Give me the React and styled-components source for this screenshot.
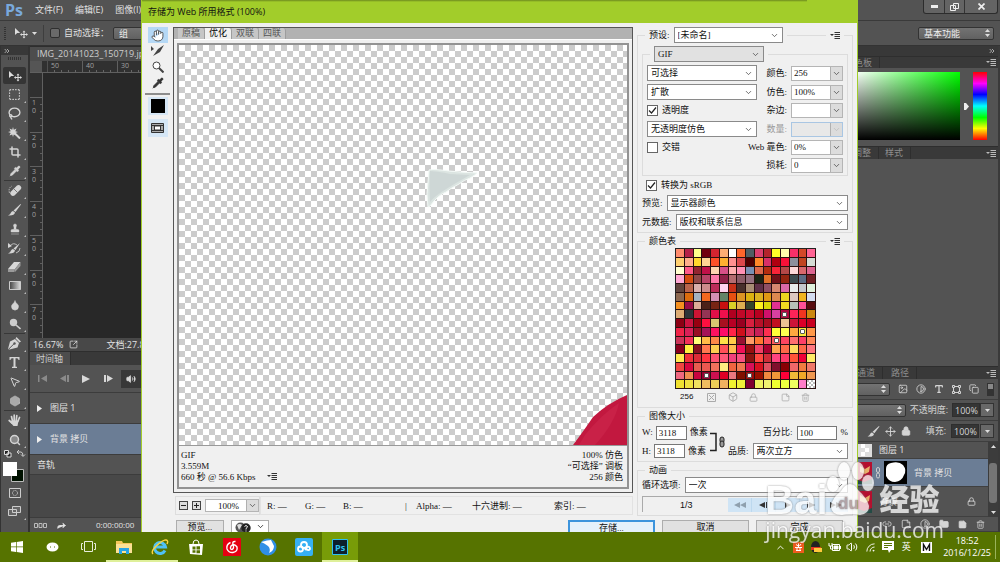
import React from "react";
import styled, { createGlobalStyle, css } from "styled-components";
import {
    Hand, Search, Pipette, Stamp, Droplet, MousePointer2,
    Hexagon, Crop, Lasso, SquareDashed, Volume2, Lock, Trash2, Type,
    Box, StickyNote, Image, Contrast, Copy, Move, ChevronUp, ChevronDown, Link2, Folder, Forward,
    ChevronsRight, SquareArrowOutUpRight, Rss,
} from "lucide-react";

const GlobalStyle = createGlobalStyle`
    * {
        box-sizing: border-box;
    }
    body {
        margin: 0;
        overflow: hidden;
        background: #282828;
    }
    button, input, select {
        font: inherit;
        color: inherit;
        margin: 0;
        padding: 0;
        border: 0;
        border-radius: 0;
    }
`;

const Screen = styled.div`
    position: relative;
    display: flex;
    flex-direction: column;
    height: 100vh;
    overflow: hidden;
    font-family: "Open Sans", "Noto Sans CJK SC", sans-serif;
    font-size: 9px;
    line-height: 12px;
    color: #e2e2e2;
`;

const Desktop = styled.div`
    position: relative;
    flex: 1;
    min-height: 0;
    display: flex;
    flex-direction: column;
    background: #535353;
`;

const MenuBar = styled.nav`
    display: flex;
    align-items: center;
    gap: 12px;
    height: 21px;
    padding-left: 5px;
    border-bottom: 1px solid #3a3a3a;
`;

const Logo = styled.span`
    font: bold 16px/18px "Open Sans", sans-serif;
    color: #79a9dc;
`;

const WindowButtons = styled.div`
    display: flex;
    align-self: flex-start;
    margin-left: auto;
    margin-right: 2px;
    border: 1px solid #2c2c2c;
    border-top: 0;
    border-radius: 0 0 3px 3px;
    background: #646464;
`;

const WindowButton = styled.button`
    width: ${(p) => (p.$wide ? 33 : 20)}px;
    height: 13px;
    display: grid;
    place-items: center;
    background: none;
    border-left: ${(p) => (p.$first ? 0 : "1px solid #333")};
`;

const OptionsBar = styled.div`
    display: flex;
    align-items: center;
    height: 25px;
    gap: 4px;
    padding: 0 6px 0 4px;
    border-bottom: 1px solid #333;
`;

const Grip = styled.span`
    width: ${(p) => (p.$row ? 14 : 2)}px;
    height: ${(p) => (p.$row ? 3 : 14)}px;
    background: repeating-linear-gradient(${(p) => (p.$row ? "90deg" : "0deg")}, #333 0 1px, #535353 1px 2px);
`;

const Divider = styled.span`
    width: 1px;
    height: 17px;
    margin: 0 2px;
    background: #3e3e3e;
`;

const CheckLabel = styled.label`
    display: flex;
    align-items: center;
    gap: 4px;
    white-space: nowrap;
`;

const DarkCheck = styled.input`
    appearance: none;
    width: 10px;
    height: 10px;
    border: 1px solid #2f2f2f;
    border-radius: 2px;
    background: #6a6a6a;
`;

const DarkSelect = styled.select`
    appearance: none;
    width: ${(p) => p.$w}px;
    height: 13px;
    padding-left: 5px;
    border: 1px solid #333;
    border-radius: 2px;
    background: linear-gradient(#737373, #616161);
    color: #eee;
`;

const SelectWrap = styled.span`
    display: inline-grid;
    align-items: center;
    margin-left: ${(p) => (p.$push ? "auto" : 0)};
    > * {
        grid-area: 1 / 1;
    }
    > svg {
        justify-self: end;
        margin-right: 4px;
        pointer-events: none;
    }
`;

const Workspace = styled.div`
    flex: 1;
    min-height: 0;
    display: flex;
`;

const Toolbar = styled.aside`
    flex: none;
    width: 30px;
    display: flex;
    flex-direction: column;
    align-items: center;
    border-left: 1px solid #333;
    border-right: 2px solid #333;
    padding-bottom: 4px;
`;

const ToolbarHead = styled.div`
    width: 100%;
    height: 9px;
    margin-bottom: 2px;
    padding-left: 2px;
    background: #383838;
    display: flex;
    align-items: center;
`;

const ToolList = styled.div`
    display: flex;
    flex-direction: column;
    align-items: center;
    padding-top: 6px;
`;

const ToolButton = styled.button`
    position: relative;
    width: 23px;
    height: 17px;
    margin: 1px 0;
    display: grid;
    place-items: center;
    border-radius: 2px;
    color: #d4d4d4;
    background: ${(p) => (p.$active ? "#353535" : "none")};
    &::after {
        content: "";
        position: absolute;
        right: 0;
        bottom: 0;
        border: 1px solid transparent;
        border-right-color: #bbb;
        border-bottom-color: #bbb;
        display: ${(p) => (p.$active || p.$plain ? "none" : "block")};
    }
`;

const ToolSeparator = styled.span`
    width: 21px;
    height: 1px;
    background: #383838;
`;

const Document = styled.main`
    flex: 1;
    min-width: 0;
    display: flex;
    flex-direction: column;
    background: #282828;
`;

const TabStrip = styled.div`
    display: flex;
    align-items: stretch;
    height: ${(p) => p.$h}px;
    background: #393939;
    border-top: 1px solid #2e2e2e;
`;

const Tab = styled.span`
    display: flex;
    align-items: center;
    padding: 0 7px 0 ${(p) => p.$pad || 6}px;
    background: ${(p) => (p.$on ? "#4d4d4d" : "none")};
    border-right: 1px solid #2e2e2e;
    color: ${(p) => (p.$dim ? "#8e8e8e" : "#cdcdcd")};
    white-space: nowrap;
`;

const RulerRow = styled.div`
    display: flex;
    height: 12px;
    background: #303030;
    border-bottom: 1px solid #606060;
    color: #a0a0a0;
    font-size: 7px;
    line-height: 9px;
`;

const RulerCorner = styled.span`
    flex: none;
    width: 18px;
    border-right: 1px solid #505050;
    background: linear-gradient(90deg, #555 12px, transparent 12px);
`;

const RulerMark = styled.span`
    flex: none;
    width: 35px;
    padding-left: 3px;
    border-right: 1px solid #606060;
    background: repeating-linear-gradient(90deg, transparent 0 6px, #666 6px 7px) bottom / 100% 2px no-repeat;
`;

const CanvasRow = styled.div`
    flex: 1;
    min-height: 0;
    display: flex;
`;

const VerticalRuler = styled.div`
    width: 13px;
    overflow: hidden;
    padding-top: 24px;
    background: #303030;
    border-right: 1px solid #606060;
`;

const VerticalMark = styled.div`
    display: grid;
    align-content: start;
    row-gap: 1px;
    width: 12px;
    height: ${(p) => (p.$short ? 34 : 35)}px;
    padding: 1px 0 0 2px;
    border-top: 1px solid #606060;
    color: #a0a0a0;
    font-size: 7px;
    line-height: 7px;
    background: repeating-linear-gradient(#303030 0 6px, #606060 6px 7px) right / 2px 100% no-repeat;
`;

const StatusBar = styled.div`
    display: flex;
    align-items: center;
    height: 13px;
    padding-left: 3px;
    gap: 6px;
    background: #484848;
    > :last-child {
        margin-left: 22px;
    }
`;

const Playback = styled.div`
    display: flex;
    align-items: center;
    height: 28px;
    padding-left: 1px;
    background: #535353;
    border-bottom: 1px solid #3c3c3c;
`;

const PlayButton = styled.button`
    width: ${(p) => (p.$pressed ? 20 : 22)}px;
    height: 18px;
    margin-left: ${(p) => (p.$pressed ? 2 : 0)}px;
    display: grid;
    place-items: center;
    color: ${(p) => (p.$dim ? "#8a8a8a" : "#d8d8d8")};
    background: ${(p) => (p.$pressed ? "#383838" : "none")};
`;

const Track = styled.div`
    display: flex;
    align-items: center;
    gap: 8px;
    height: ${(p) => p.$h}px;
    padding-left: 7px;
    background: ${(p) => (p.$on ? "#6b7d95" : "#535353")};
    border-bottom: 1px solid #3c3c3c;
`;

const TrackFill = styled.div`
    height: 42px;
    background: #484848;
`;

const TimelineFoot = styled.div`
    display: flex;
    align-items: center;
    height: 15px;
    padding-left: 4px;
    gap: 9px;
    background: #535353;
    border-top: 1px solid #3c3c3c;
    > :last-child {
        margin-left: 20px;
        font-size: 8px;
    }
`;

const Panels = styled.aside`
    flex: none;
    width: 182px;
    display: flex;
    flex-direction: column;
    background: #535353;
    border-right: 2px solid #3a3a3a;
`;

const PanelHead = styled.div`
    height: 10px;
    background: #383838;
    display: flex;
    align-items: center;
    justify-content: flex-end;
    padding-right: 2px;
`;

const PanelTabs = styled(TabStrip)`
    padding-left: ${(p) => p.$left}px;
    > svg {
        margin: auto 2px auto auto;
    }
`;

const ColorPanel = styled.div`
    display: flex;
    gap: 4px;
    height: 78px;
    padding: 4px 11px 6px 0;
    align-items: stretch;
    > svg {
        align-self: center;
    }
`;

const ColorField = styled.div`
    flex: 1;
    background: linear-gradient(transparent, #000), linear-gradient(90deg, #fff, #fff 25%, #0f0);
`;

const HueBar = styled.div`
    width: 14px;
    background: linear-gradient(#f00, #f0f 17%, #00f 33%, #0ff 50%, #0f0 67%, #ff0 83%, #f00);
`;

const PanelSpace = styled.div`
    flex: 1;
    min-height: 0;
`;

const PanelRow = styled.div`
    display: flex;
    align-items: center;
    justify-content: flex-end;
    gap: ${(p) => p.$gap || 4}px;
    height: ${(p) => p.$h}px;
    padding-right: 4px;
    color: #d4d4d4;
    border-bottom: 1px solid #3e3e3e;
    white-space: nowrap;
`;

const DarkNumber = styled.input`
    width: 28px;
    height: 14px;
    padding-left: 2px;
    background: #353535;
    border: 1px solid #2e2e2e;
`;

const DarkDrop = styled.button`
    width: 14px;
    height: 14px;
    margin-left: -4px;
    display: grid;
    place-items: center;
    background: #686868;
    border: 1px solid #333;
`;

const LayerList = styled.div`
    display: flex;
    height: 75px;
`;

const Layers = styled.div`
    flex: 1;
    display: flex;
    flex-direction: column;
`;

const Layer = styled.div`
    flex: none;
    display: flex;
    align-items: center;
    gap: 3px;
    height: ${(p) => p.$h}px;
    padding-left: 40px;
    background: ${(p) => (p.$on ? "#6b7d95" : "#535353")};
    border-bottom: 1px solid #404040;
    overflow: hidden;
    > svg:last-child {
        margin: 0 12px 0 auto;
    }
`;

const LayerName = styled.span`
    padding-left: 4px;
    font-style: ${(p) => (p.$locked ? "italic" : "normal")};
`;

const LayerScroll = styled.div`
    width: 10px;
    display: flex;
    flex-direction: column;
    align-items: center;
    justify-content: space-between;
    background: #3c3c3c;
    padding: 3px 0;
`;

const ScrollThumb = styled.span`
    width: 8px;
    height: 40px;
    margin-top: 6px;
    border-radius: 3px;
    background: #757575;
`;

/* ---- export dialog ---- */

const Dialog = styled.section`
    position: absolute;
    top: 0;
    bottom: 0;
    left: 141px;
    right: 142px;
    display: flex;
    flex-direction: column;
    overflow: hidden;
    background: #f0f0f0;
    border: solid #a2cd2a;
    border-width: 0 1px;
    color: #111;
    font-family: "Liberation Serif", "Noto Sans CJK SC", serif;
`;

const TitleBar = styled.h1`
    flex: none;
    margin: 0;
    height: 23px;
    padding-left: 6px;
    font: 9px/24px "Open Sans", "Noto Sans CJK SC", sans-serif;
    background: linear-gradient(#6e8b1e, #a2cd2a) 0 0 / calc(100% - 50px) 2px no-repeat, #a2cd2a;
`;

const DialogBody = styled.div`
    flex: 1;
    min-height: 0;
    display: flex;
    padding: 4px 4px 5px 3px;
`;

const SideTools = styled.div`
    flex: none;
    width: 25px;
    margin-right: 3px;
    display: flex;
    flex-direction: column;
    align-items: center;
`;

const SideTool = styled.button`
    width: 20px;
    height: ${(p) => (p.$tall ? 18 : 16)}px;
    margin-bottom: ${(p) => (p.$tall ? 4 : 0)}px;
    display: grid;
    place-items: center;
    color: #333;
    background: ${(p) => (p.$tall ? "#d5e6f5" : p.$on ? "#b5d8f5" : "none")};
`;

const SideLine = styled.span`
    width: 25px;
    height: 2px;
    margin: 2px 0;
    background: #8d8d8d;
`;

const BlackSwatch = styled.span`
    width: 14px;
    height: 14px;
    background: #000;
`;

const PreviewColumn = styled.div`
    flex: 1;
    min-width: 0;
    margin-right: 4px;
    display: flex;
    flex-direction: column;
    gap: 3px;
`;

const PreviewFrame = styled.div`
    flex: 1;
    min-height: 0;
    display: flex;
    flex-direction: column;
    border: 1px solid #555;
    padding: 0 3px 3px;
`;

const PreviewTabs = styled.div`
    display: flex;
    height: 12px;
    margin: 0 -3px 3px;
    padding-left: 4px;
    background: #b2b2b2;
    border-bottom: 1px solid #fff;
`;

const PreviewTab = styled.button`
    width: 27px;
    height: 11px;
    line-height: 11px;
    border-right: 1px solid #9d9d9d;
    border-radius: 0 3px 0 0;
    background: ${(p) => (p.$on ? "#f0f0f0" : "#c6c6c6")};
    color: ${(p) => (p.$on ? "#000" : "#555")};
`;

const PreviewInner = styled.div`
    flex: 1;
    min-height: 0;
    display: flex;
    flex-direction: column;
    border: 2px solid #939393;
`;

const Checker = styled.div`
    position: relative;
    flex: 1;
    background: conic-gradient(#ccc 25%, #fff 0 50%, #ccc 0 75%, #fff 0) 0 0 / 12px 12px;
`;

const Slice = styled.svg`
    position: absolute;
    left: ${(p) => p.$left};
    right: ${(p) => p.$right};
    top: ${(p) => p.$top};
    bottom: ${(p) => p.$bottom};
`;

const PreviewInfo = styled.div`
    display: flex;
    justify-content: space-between;
    height: 42px;
    padding: 4px 4px 0 2px;
    border-top: 1px solid #999;
    line-height: 11px;
    p {
        margin: 0;
    }
    p:last-child {
        text-align: right;
    }
`;

const ZoomRow = styled.div`
    display: flex;
    height: 19px;
`;

const ZoomBox = styled.div`
    display: flex;
    align-items: center;
    border: 1px solid #ddd;
    margin-left: 2px;
    padding-left: 3px;
    gap: 4px;
`;

const StepButton = styled.button`
    width: 9px;
    height: 9px;
    display: grid;
    place-items: center;
    border: 1px solid #444;
    background: #ddd;
`;

const Readout = styled.div`
    flex: 1;
    display: grid;
    grid-template-columns: 38px 38px 62px 11px 56px 82px 1fr;
    align-items: center;
    padding-left: 6px;
    border: 1px solid #e2e2e2;
`;

const Settings = styled.div`
    flex: none;
    width: 216px;
    display: flex;
    flex-direction: column;
    line-height: 11px;
`;

const Group = styled.fieldset`
    min-width: 0;
    margin: 0 0 ${(p) => p.$after || 0}px;
    padding: 0 4px ${(p) => p.$bottom || 2}px;
    border: 1px solid #dcdcdc;
`;

const Legend = styled.legend`
    width: 100%;
    height: ${(p) => p.$h || 13}px;
    padding: 0;
    display: flex;
    align-items: center;
    gap: 4px;
    > i {
        height: 1px;
        background: #dcdcdc;
    }
    > i:first-child {
        width: 3px;
    }
    > i:not(:first-child) {
        flex: 1;
    }
    > svg + i:last-child {
        flex: none;
        width: 4px;
    }
`;

const OptionGrid = styled.div`
    display: grid;
    grid-template-columns: 110px minmax(0, 1fr) 52px;
    align-items: center;
    column-gap: 4px;
    row-gap: 3px;
    > label:nth-child(3n + 2) {
        justify-self: end;
    }
`;

const Field = styled.div`
    display: flex;
    align-items: center;
    justify-content: ${(p) => (p.$end ? "flex-end" : "flex-start")};
    gap: ${(p) => p.$gap || 4}px;
    height: ${(p) => p.$h || 16}px;
    margin-top: ${(p) => p.$top || 0}px;
    white-space: nowrap;
`;

const selectBase = css`
    appearance: none;
    width: 100%;
    height: 16px;
    padding-left: 3px;
    border: 1px solid #8a8a8a;
    background: ${(p) => (p.$grey ? "#e1e1e1" : "#fff")};
`;

const LightSelect = styled.select`
    ${selectBase}
`;

const LightWrap = styled(SelectWrap)`
    flex: ${(p) => (p.$w ? "none" : 1)};
    width: ${(p) => (p.$w ? p.$w + "px" : "auto")};
`;

const ComboBox = styled.div`
    display: flex;
    height: ${(p) => p.$h || 15}px;
    width: ${(p) => p.$w || 52}px;
    border: 1px solid ${(p) => (p.$off ? "#a9c6e3" : "#b5b5b5")};
    background: ${(p) => (p.$off ? "#e8e8e8" : "#fff")};
    input {
        flex: 1;
        min-width: 0;
        padding-left: ${(p) => p.$pad || 2}px;
        background: none;
    }
    button {
        width: 12px;
        display: grid;
        place-items: center;
        background: #dcdcdc;
        border-left: 1px solid #b0b0b0;
        color: ${(p) => (p.$off ? "#bbb" : "#444")};
    }
`;

const GreyLabel = styled.label`
    color: ${(p) => (p.$off ? "#999" : "#111")};
    white-space: nowrap;
`;

const CheckBox = styled.input`
    appearance: none;
    width: 11px;
    height: 11px;
    border: 1px solid #666;
    background: #fff;
    &:checked {
        background: #fff url("data:image/svg+xml,%3Csvg xmlns='http://www.w3.org/2000/svg' viewBox='0 0 9 9'%3E%3Cpath d='M1 4.5 3.5 7 8 1.5' fill='none' stroke='%23222' stroke-width='1.2'/%3E%3C/svg%3E");
    }
`;

const Swatches = styled.div`
    display: grid;
    grid-template-columns: repeat(16, 1fr);
    grid-template-rows: repeat(16, 1fr);
    width: 141px;
    height: 141px;
    margin-left: 33px;
    border: solid #222;
    border-width: 1px 0 0 1px;
`;

const Swatch = styled.span`
    display: grid;
    place-items: center;
    border: solid #2a1010;
    border-width: 0 1px 1px 0;
    background: ${(p) => (p.$c === "#checks" ? "repeating-conic-gradient(#fff 0 25%, #bbb 0 50%) 0 0 / 4px 4px" : p.$c)};
    &::after {
        content: "";
        width: 3px;
        height: 3px;
        border: 1px solid #555;
        border-radius: 1px;
        background: #fff;
        display: ${(p) => (p.$mark ? "block" : "none")};
    }
`;

const SwatchTools = styled.div`
    display: grid;
    grid-template-columns: 27px 21px 21px 32px 20px 12px;
    align-items: center;
    height: 16px;
    padding-left: 38px;
    color: #aaa;
    font: 8px/12px "Liberation Sans", sans-serif;
    span {
        color: #111;
    }
`;

const SizeGrid = styled.div`
    display: grid;
    grid-template-columns: 66px 20px 1fr;
    row-gap: 3px;
    align-items: center;
    padding-top: 2px;
    > svg {
        grid-area: 1 / 2 / 3 / 3;
    }
`;

const NumberInput = styled.input`
    width: ${(p) => p.$w}px;
    height: 14px;
    padding-left: 2px;
    border: 1px solid #777;
    background: #fff;
`;

const FrameBar = styled.div`
    display: flex;
    align-items: center;
    height: 16px;
    margin-top: 3px;
    padding-left: 37px;
    border: solid #aaa;
    border-width: 1px 0 0 1px;
    font: 9px/12px "Liberation Sans", sans-serif;
    span {
        flex: 1;
    }
`;

const FrameButton = styled.button`
    width: 24px;
    height: 14px;
    display: grid;
    place-items: center;
    background: #cfe4f5;
    border-right: 1px solid #bcd8ee;
    color: ${(p) => (p.$dim ? "#8fa0ae" : "#333")};
`;

const DialogFooter = styled.footer`
    flex: none;
    display: flex;
    height: 12px;
    gap: 7px;
    padding: 0 14px 0 34px;
    overflow: hidden;
`;

const PushButton = styled.button`
    width: ${(p) => p.$w || 87}px;
    height: 18px;
    line-height: 12px;
    border: ${(p) => (p.$main ? "2px solid #3d94dc" : "1px solid #adadad")};
    background: ${(p) => (p.$main ? "#e5f1fb" : "#e1e1e1")};
    display: flex;
    justify-content: center;
`;

const HelpDrop = styled(PushButton)`
    background: #fff;
    margin-right: auto;
    gap: 5px;
    padding-top: 1px;
`;

/* ---- taskbar ---- */

const Taskbar = styled.footer`
    flex: none;
    display: flex;
    align-items: stretch;
    height: 30px;
    background: #567300;
    color: #fff;
`;

const TaskItem = styled.button`
    width: ${(p) => (p.$first ? 34 : 36)}px;
    display: grid;
    place-items: center;
    background: ${(p) => (p.$on ? "#789c08" : "none")};
    border-bottom: 2px solid ${(p) => (p.$open ? "#dff09a" : "transparent")};
    background-clip: padding-box;
    padding-top: 2px;
`;

const Tray = styled.div`
    display: flex;
    align-items: center;
    margin-left: auto;
    > span {
        width: 18px;
        display: grid;
        place-items: center;
    }
    > span:nth-of-type(9) {
        width: 22px;
    }
`;

const Clock = styled.time`
    margin: 0 4px 0 6px;
    padding-right: 4px;
    border-right: 1px solid #9ab35a;
    text-align: center;
    font-size: 9px;
    line-height: 12px;
`;

const Watermark = styled.div`
    position: absolute;
    right: 56px;
    bottom: 20px;
    opacity: 0.76;
    color: #fff;
    pointer-events: none;
    text-shadow: 0 0 2px #666;
    font-family: "Liberation Sans", "Noto Sans CJK SC", sans-serif;
`;

const WatermarkBrand = styled.div`
    display: flex;
    align-items: flex-end;
    height: 60px;
    font-size: 40px;
    line-height: 36px;
    font-weight: bold;
    svg {
        overflow: visible;
        filter: drop-shadow(0 0 1px #777);
    }
    b:last-child {
        margin-left: 6px;
        font-size: 30px;
    }
`;

const WatermarkUrl = styled.div`
    font: 21px/24px "Open Sans", sans-serif;
`;

const rows = [
    "ff8c6e b52048 ffff8c 70000e d42430 ffac74 ffffff ff662c 505e64 dc4070 b4242c ffff28 ffffac f83068 d44828 ff6494",
    "ffd070 ffb08c ffd82c ffd494 ff5028 ffb030 ff9090 dc484c 500000 ff8828 d83068 b00010 f81038 8c909c c04420 d4dcd4",
    "ffffd0 ff5888 942430 c01048 ffd4b0 d85088 ffb0b0 ff90b4 7890b4 dc684c b42c10 f82438 b44848 fcd8d8 d8686c dc6490",
    "ffa8d4 d44c10 904848 b84468 ff78a8 902048 b46c70 8c5c68 947080 1c2414 e07028 701018 942410 3c4c50 5c6c84 702024",
    "60443c b8644c d8b0ac cc8c8c bc2c58 ffd4f0 c83018 48302c a88c74 603048 905064 d88870 dc68a8 e8ecec c4c8cc e0f0dc",
    "8c6850 dc6c0c a4b4c0 f46820 d490b4 648468 e85010 dc9424 dcb010 dcb020 e09814 dc8850 ecd420 dcc8c0 f0b420 d4dcf0",
    "f49020 980c48 dcac98 4c2018 782414 c81010 d8d028 dcb050 34442c fff020 dcd808 e03090 f0d820 b8c0b8 ff5098 580c10",
    "dcac74 2c3438 cc1434 943454 e01048 f0104c b00020 c00828 cc0c30 b80020 d0106c d840a0 b00840 ff2458 f03420 cc8810",
    "8c0014 cc1440 980010 ff1040 d8c870 a81020 b80024 980020 d82040 b81028 a80c20 c01020 ecc494 cc1438 dc0028 c80020",
    "f02448 d82058 981024 a41458 ff1060 ff0c68 ff2448 d0101c dc3058 c82058 ff3050 ffff38 ffff50 ffa840 f8e838 ff9848",
    "cc3458 f43058 ffff78 ffbc48 ff8848 ffe048 ffcc48 981030 ff9c68 ff7830 ff5060 ff5c5c ff4460 ff7070 ff4068 ff8858",
    "88001c fff040 881020 ff7850 ffcc50 ff5058 ffbc50 f01058 981010 f04068 a80030 ffa450 ff6848 ffdc60 ff6848 ff7880",
    "ffec50 f03038 dc2c38 ff3440 ff5070 ff5878 f0407c f85080 881410 ff4840 d02c38 ff4480 ff3868 ff5438 f00038 ffec68",
    "f04440 d80440 e85c50 ec5850 f0705c ffec80 f06440 f07850 d81058 d81020 e05060 80102c 880004 f06868 f07c40 f07868",
    "f06880 f08c50 c80440 980030 cc1050 e00024 ec7880 801000 a00808 981000 f08840 f09838 ff0038 f0b838 f0a828 f09850",
    "f0e030 f0e040 f0e060 f0bc60 f0cc58 f0b060 f0f030 f0f038 800030 f0f060 f0f070 f0ff30 f0ff40 f0ff60 ff7cc8 checks",
];
const palette = rows.join(" ").split(" ");
const marked = [124, 158, 171, 227, 232];

function UpDown() {
    return (
        <svg width="5" height="8" viewBox="0 0 5 8" fill="#ddd">
            <path d="M0 3 2.5 0 5 3zM0 5h5L2.5 8z" />
        </svg>
    );
}

function Caret({ color = "#ddd" }) {
    return (
        <svg width="5" height="3" viewBox="0 0 5 3" fill={color}>
            <path d="M0 0h5L2.5 3z" />
        </svg>
    );
}

function MenuIcon({ color = "#bbb" }) {
    return (
        <svg width="10" height="7" viewBox="0 0 10 7">
            <path d="M0 2h4L2 4z" fill={color} />
            <path d="M4.500.5h5.500M4.500 2.500h5.500M4.500 4.500h5.500M4.500 6.500h5.500" stroke={color} />
        </svg>
    );
}

function MoveIcon() {
    return (
        <svg width="14" height="12" viewBox="0 0 14 12" fill="#ddd">
            <path d="M1 1v7l2.200-2h3z" />
            <path d="M10 3.500 11.500 5.300h-1v1.700h1.700v-1L14 7.500 12.200 9v-1h-1.700v1.700h1L10 11.500 8.500 9.700h1V8H7.800v1L6 7.500 7.800 6v1h1.700V5.300h-1z" />
        </svg>
    );
}

function Select({ label, value, w, grey }) {
    return (
        <LightWrap $w={w}>
            <LightSelect aria-label={label} $grey={grey} defaultValue={value}>
                <option>{value}</option>
            </LightSelect>
            <ChevronDown size={9} color="#444" />
        </LightWrap>
    );
}

function Combo({ id, value, off, w, h, pad, label }) {
    return (
        <ComboBox $off={off} $w={w} $h={h} $pad={pad}>
            <input id={id} defaultValue={value} disabled={off} aria-label={label} />
            <button aria-label="▾" disabled={off}><ChevronDown size={9} /></button>
        </ComboBox>
    );
}

function Check({ text, checked }) {
    return (
        <CheckLabel>
            <CheckBox type="checkbox" defaultChecked={checked} />
            {text}
        </CheckLabel>
    );
}

const filled = { fill: "currentColor", strokeWidth: 1 };
const toolGroups = [
    [
        <MoveIcon />,
        <SquareDashed size={13} />,
        <Lasso size={13} strokeWidth={2.500} />,
        <svg width="13" height="12" viewBox="0 0 13 12" stroke="#d4d4d4">
            <path d="m6 5.500 6 6" strokeWidth="2" />
            <path d="m5 0 .8 2.700L8.500 1.500 7.300 4.200 10 5 7.300 6l1 2.500L5.800 7.500 5 10l-.8-2.500L1.500 8.500l1.200-2.500L0 5l2.700-.8L1.500 1.500l2.700 1.200z" fill="#d4d4d4" stroke="none" />
        </svg>,
        <Crop size={12} strokeWidth={3} />,
        <Pipette size={12} {...filled} />,
    ],
    [
        <svg width="14" height="13" viewBox="0 0 14 13">
            <path d="M1.500 9Q0 4 4 2" fill="none" stroke="#bbb" strokeDasharray="1.500 1" />
            <path d="M2.500 8 9 1.500q2-1 3.500.5T13 5L6.500 11.500q-2 1-3.500-.5T2.500 8z" fill="#d4d4d4" />
            <path d="m6 5 3.500 3.500" stroke="#777" />
        </svg>,
        <svg width="13" height="12" viewBox="0 0 13 12" fill="#d4d4d4">
            <path d="M12.500 0 13 .6 7.500 8 5.500 6.400zM5 7l2 1.600Q6.500 12 0 11.500 2.500 10.500 3 8.500 3.700 7 5 7z" />
        </svg>,
        <Stamp size={12} {...filled} />,
        <svg width="13" height="12" viewBox="0 0 13 12" fill="#d4d4d4">
            <path d="M12 1 7.500 8 5.500 6.500zM5 7l2 1.600Q6.500 12 0 11.500 2.500 10.500 3 8.500 3.700 7 5 7z" />
            <path d="M2 4q3-4 7-1M12 6q0 4-4 5" fill="none" stroke="#bbb" />
            <path d="M0 1v5l4-2z" />
        </svg>,
        <svg width="13" height="10" viewBox="0 0 13 10">
            <path d="M0 7 6 0h6.500L7 7z" fill="#d8d8d8" />
            <path d="M0 7v3h6.500L7 7zM7 7v3l5.500-6V0z" fill="#9a9a9a" />
        </svg>,
        <svg width="12" height="9" viewBox="0 0 12 9">
            <defs>
                <linearGradient id="grad"><stop stopColor="#444" /><stop offset="1" stopColor="#ddd" /></linearGradient>
            </defs>
            <path d="M.5.5h11v8H.5z" fill="url(#grad)" stroke="#ccc" />
        </svg>,
        <Droplet size={12} {...filled} />,
        <svg width="12" height="12" viewBox="0 0 12 12">
            <circle cx="4.500" cy="4.500" r="3.700" fill="#ccc" />
            <path d="m7 7 4.500 4" stroke="#ccc" strokeWidth="1.600" />
        </svg>,
    ],
    [
        <svg width="13" height="13" viewBox="0 0 13 13">
            <path d="m8.500 0 4.500 4.500-1.500 1L7.500 1.500zM7 2l4 4-1.500 4.500L1.500 12.500 0 12l2-7.500z" fill="#d4d4d4" />
            <path d="m.8 12 5-5" stroke="#555" />
            <circle cx="6.500" cy="6.500" r="1.200" fill="#555" />
        </svg>,
        <svg width="11" height="11" viewBox="0 0 11 11" fill="#d4d4d4">
            <path d="M.5 0h10v3H9.500Q9.500 1.200 8 1.200H6.500v8.600H8V11H3V9.800h1.500V1.200H3Q1.500 1.200 1.500 3h-1z" />
        </svg>,
        <MousePointer2 size={12} />,
        <Hexagon size={12} {...filled} fill="#aaa" />,
    ],
    [
        <svg width="13" height="13" viewBox="0 0 13 13" fill="none" stroke="#d4d4d4" strokeLinecap="round">
            <path d="M4.500 7 3.500 2.500M6.200 6.500V1.200M8.200 6.500 8.800 1.700M9.800 7.500 11.500 3.500M4 9 1.200 6.500" strokeWidth="1.700" />
            <path d="M3.500 6.500h7L9.500 12h-4L2.500 8.500z" fill="#d4d4d4" stroke="none" />
        </svg>,
        <Search size={12} strokeWidth={3} fill="#888" style={{ transform: "none" }} />,
    ],
];

function ToolPanel() {
    return (
        <Toolbar>
            <ToolbarHead><ChevronsRight size={8} /></ToolbarHead>
            <Grip $row />
            <ToolList>
                {toolGroups.map((group, g) => (
                    <React.Fragment key={g}>
                        {g > 0 && <ToolSeparator />}
                        {group.map((icon, i) => (
                            <ToolButton key={i} $active={g === 0 && i === 0}>{icon}</ToolButton>
                        ))}
                    </React.Fragment>
                ))}
                <svg width="23" height="34" viewBox="0 0 23 34">
                    <path d="M1.500 1.500h4v4h-4zM4 4h4v4H4z" fill="#222" stroke="#ddd" />
                    <path d="M14 3h4q2 0 2 4M16 1l-2 2 2 2M18 5.500l2 2 2-2" fill="none" stroke="#ccc" />
                    <path d="M8.500 20.500h12v12h-12z" fill="#010" stroke="#bbb" />
                    <path d="M0 13h14v14H0z" fill="#fff" />
                </svg>
                <ToolButton $plain>
                    <svg width="12" height="10" viewBox="0 0 12 10" fill="none" stroke="#ccc">
                        <path d="M.5.5h11v9H.5z" />
                        <circle cx="6" cy="5" r="2.500" strokeDasharray="1 .6" />
                    </svg>
                </ToolButton>
                <ToolButton>
                    <svg width="13" height="11" viewBox="0 0 13 11" fill="#666" stroke="#ccc">
                        <path d="M4.500.5h8v6h-8zM.5 3.500h8v6h-8z" />
                    </svg>
                </ToolButton>
            </ToolList>
        </Toolbar>
    );
}

function DocumentArea() {
    return (
        <Document>
            <TabStrip $h={15}><Tab $on $pad={7}>IMG_20141023_150719.jpg</Tab></TabStrip>
            <RulerRow>
                <RulerCorner />
                {[50, 40, 30].map((n) => <RulerMark key={n}>{n}</RulerMark>)}
            </RulerRow>
            <CanvasRow>
                <VerticalRuler>
                    {[1, 2, 3, 4, 5, 6, 7].map((n) => (
                        <VerticalMark key={n} $short={n % 2 === 0}>
                            <span>{n}</span>
                            <span>0</span>
                        </VerticalMark>
                    ))}
                </VerticalRuler>
            </CanvasRow>
            <StatusBar>
                <span>16.67%</span>
                <SquareArrowOutUpRight size={9} />
                <span>文档:27.8M</span>
            </StatusBar>
            <TabStrip $h={14}><Tab $on>时间轴</Tab></TabStrip>
            <Playback>
                <PlayButton $dim><svg width="9" height="7" fill="currentColor"><path d="M0 0h1.500v7H0zM9 0v7L3 3.500z" /></svg></PlayButton>
                <PlayButton $dim><svg width="9" height="7" fill="currentColor"><path d="M6 0v7L0 3.500zM7 0h2v7H7z" /></svg></PlayButton>
                <PlayButton><svg width="8" height="8" fill="currentColor"><path d="M0 0v8l8-4z" /></svg></PlayButton>
                <PlayButton><svg width="9" height="7" fill="currentColor"><path d="M0 0h2v7H0zM3 0v7l6-3.500z" /></svg></PlayButton>
                <PlayButton $pressed><Volume2 size={10} fill="currentColor" /></PlayButton>
            </Playback>
            <Track $h={31}><svg width="5" height="7" fill="#eee"><path d="M0 0v7l5-3.500z" /></svg>图层 1</Track>
            <Track $h={31} $on><svg width="5" height="7" fill="#eee"><path d="M0 0v7l5-3.500z" /></svg>背景 拷贝</Track>
            <Track $h={20}>音轨</Track>
            <TrackFill />
            <TimelineFoot>
                <svg width="13" height="5" fill="none" stroke="#bbb"><path d="M.5.5h3v4h-3zM5 .5h3v4H5zM9.500.5h3v4h-3z" /></svg>
                <Forward size={11} fill="currentColor" />
                <span>0:00:00:00</span>
            </TimelineFoot>
        </Document>
    );
}

function Thumb() {
    return (
        <svg width="14" height="22" viewBox="0 0 14 22">
            <path d="M0 0h14v22H0z" fill="#b50f2e" />
            <path d="M2 4 7 7l5-3-1 6-4 2-5-2z" fill="#e8b06a" />
            <path d="M0 18l6 2 8-3v5H0z" fill="#234b45" />
        </svg>
    );
}

function RightPanels() {
    return (
        <Panels>
            <PanelHead><ChevronsRight size={8} /></PanelHead>
            <PanelTabs $h={12} $left={30}><Tab $dim>色板</Tab><MenuIcon /></PanelTabs>
            <ColorPanel>
                <ColorField />
                <svg width="5" height="7" fill="#eee"><path d="M0 0h2l3 3.500L2 7H0z" /></svg>
                <HueBar />
            </ColorPanel>
            <PanelTabs $h={13} $left={29}><Tab $dim>调整</Tab><Tab $dim>样式</Tab><MenuIcon /></PanelTabs>
            <PanelSpace />
            <PanelTabs $h={13} $left={33}><Tab $dim>通道</Tab><Tab $dim $pad={8}>路径</Tab><MenuIcon /></PanelTabs>
            <PanelRow $h={21} $gap={8}>
                <SelectWrap><DarkSelect $w={70} aria-label="类型" /><UpDown /></SelectWrap>
                <Image size={10} />
                <Contrast size={10} />
                <Type size={10} strokeWidth={3} />
                <svg width="9" height="9" fill="#535353" stroke="#d4d4d4">
                    <path d="M1.500 1.500h6v6h-6z" /><path d="M.5.5h2v2h-2zM6.500.5h2v2h-2zM.5 6.500h2v2h-2zM6.500 6.500h2v2h-2z" />
                </svg>
                <Copy size={10} />
                <svg width="7" height="13"><path d="M0 0h7v13H0z" fill="#333" /><path d="M1 1h5v5H1z" fill="#888" /></svg>
            </PanelRow>
            <PanelRow $h={21}>
                <SelectWrap><DarkSelect $w={80} aria-label="混合" /><UpDown /></SelectWrap>
                <label htmlFor="opacity">不透明度:</label>
                <DarkNumber id="opacity" defaultValue="100%" />
                <DarkDrop><Caret /></DarkDrop>
            </PanelRow>
            <PanelRow $h={21} $gap={5}>
                <svg width="13" height="11" viewBox="0 0 13 12" fill="#d4d4d4">
                    <path d="M12.500 0 13 .6 7.500 8 5.500 6.400zM5 7l2 1.600Q6.500 12 0 11.500 2.500 10.500 3 8.500 3.700 7 5 7z" />
                </svg>
                <Move size={11} />
                <Lock size={10} fill="currentColor" />
                <span />
                <span />
                <label htmlFor="fill">填充:</label>
                <DarkNumber id="fill" defaultValue="100%" />
                <DarkDrop><Caret /></DarkDrop>
            </PanelRow>
            <LayerList>
                <Layers>
                    <Layer $h={17}>
                        <svg width="14" height="13"><path d="M0 0h14v13H0z" fill="#ddd" /><path d="M3 0h4v4h4v4H7v4H3V8h4V4H3z" fill="#fff" /></svg>
                        <LayerName>图层 1</LayerName>
                    </Layer>
                    <Layer $h={28} $on>
                        <Thumb />
                        <svg width="6" height="12" fill="none" stroke="#ccc"><rect x="1.500" y=".5" width="3" height="5" rx="1.500" /><rect x="1.500" y="6" width="3" height="5" rx="1.500" /></svg>
                        <svg width="23" height="23"><path d="M0 0h23v23H0z" /><path d="M2 8q0-5 5-6 8-2 12 2 4 5 1 10-2 6-9 7-6 0-9-6z" fill="#fff" /></svg>
                        <LayerName>背景 拷贝</LayerName>
                    </Layer>
                    <Layer $h={30}>
                        <Thumb />
                        <LayerName $locked>背景</LayerName>
                        <Lock size={9} />
                    </Layer>
                </Layers>
                <LayerScroll>
                    <svg width="5" height="3" fill="#ddd"><path d="M0 3h5L2.500 0z" /></svg>
                    <ScrollThumb />
                    <Caret />
                </LayerScroll>
            </LayerList>
            <PanelRow $h={15} $gap={9}>
                <Link2 size={10} />
                <StickyNote size={10} />
                <Contrast size={10} />
                <Folder size={10} fill="currentColor" />
                <StickyNote size={9} fill="currentColor" />
                <Trash2 size={9} />
                <span />
            </PanelRow>
        </Panels>
    );
}

function Preview() {
    return (
        <PreviewColumn>
            <PreviewFrame>
                <PreviewTabs>
                    <PreviewTab>原稿</PreviewTab>
                    <PreviewTab $on>优化</PreviewTab>
                    <PreviewTab>双联</PreviewTab>
                    <PreviewTab>四联</PreviewTab>
                </PreviewTabs>
                <PreviewInner>
                    <Checker>
                        <Slice $left="55%" $top="31%" width="54" height="42" viewBox="0 0 54 42">
                            <path d="M4 1q2-1 12 0 14 2 36 3-2 2-7 5-6 2-11 6-8 4-13 8-8 3-16 14l-2 1Q1 24 3 13z" fill="#dbe4e1" stroke="#f3f9f6" />
                            <path d="M5 2q12 1 20 3l20 1-14 8-13 8Q9 28 5 33 4 18 5 2z" fill="#c9d2d2" opacity=".7" />
                        </Slice>
                        <Slice $right="0" $bottom="0" width="54" height="50" viewBox="0 0 54 50">
                            <path d="M0 50q12-16 20-28Q35 8 54 0v50z" fill="#c2183f" />
                            <path d="M12 40q16-20 34-32-4 20-24 42H6z" fill="#cf2950" opacity=".5" />
                        </Slice>
                    </Checker>
                    <PreviewInfo>
                        <p>GIF<br />3.559M<br />660 秒 @ 56.6 Kbps &nbsp; &nbsp; <MenuIcon color="#333" /></p>
                        <p>100% 仿色<br />“可选择” 调板<br />256 颜色</p>
                    </PreviewInfo>
                </PreviewInner>
            </PreviewFrame>
            <ZoomRow>
                <ZoomBox>
                    <StepButton aria-label="-"><svg width="5" height="5"><path d="M0 2.500h5" stroke="#222" /></svg></StepButton>
                    <StepButton aria-label="+"><svg width="5" height="5"><path d="M0 2.500h5M2.500 0v5" stroke="#222" /></svg></StepButton>
                    <Combo label="缩放" value="100%" w={54} h={13} pad={12} />
                </ZoomBox>
                <Readout>
                    <span>R: —</span><span>G: —</span><span>B: —</span><span>|</span>
                    <span>Alpha: —</span><span>十六进制: —</span><span>索引: —</span>
                </Readout>
            </ZoomRow>
        </PreviewColumn>
    );
}

function ExportSettings() {
    return (
        <Settings>
            <Group $after={2}>
                <Legend $h={16}>
                    <i />预设: <Select label="预设" value="[未命名]" w={109} /><i /><MenuIcon color="#333" /><i />
                </Legend>
                <Group>
                    <Legend $h={22}>
                        <i /><Select label="格式" value="GIF" w={110} grey /><i />
                    </Legend>
                    <OptionGrid>
                        <Select label="减低颜色深度算法" value="可选择" />
                        <GreyLabel htmlFor="colors">颜色:</GreyLabel>
                        <Combo id="colors" value="256" />
                        <Select label="仿色算法" value="扩散" />
                        <GreyLabel htmlFor="dither">仿色:</GreyLabel>
                        <Combo id="dither" value="100%" />
                        <Check text="透明度" checked />
                        <GreyLabel htmlFor="matte">杂边:</GreyLabel>
                        <Combo id="matte" value="" />
                        <Select label="透明度仿色" value="无透明度仿色" />
                        <GreyLabel htmlFor="amount" $off>数量:</GreyLabel>
                        <Combo id="amount" value="" off />
                        <Check text="交错" />
                        <GreyLabel htmlFor="snap">Web 靠色:</GreyLabel>
                        <Combo id="snap" value="0%" />
                        <span />
                        <GreyLabel htmlFor="lossy">损耗:</GreyLabel>
                        <Combo id="lossy" value="0" />
                    </OptionGrid>
                </Group>
                <Field $h={13} $top={3}><span /><Check text="转换为 sRGB" checked /></Field>
                <Field $top={3}>预览: <Select label="预览" value="显示器颜色" /></Field>
                <Field $top={3}>元数据: <Select label="元数据" value="版权和联系信息" /></Field>
            </Group>

            <Group $after={2}>
                <Legend><i />颜色表<i /><MenuIcon color="#333" /><i /></Legend>
                <Swatches>
                    {palette.map((c, i) => <Swatch key={i} $c={"#" + c} $mark={marked.includes(i)} />)}
                </Swatches>
                <SwatchTools>
                    <span>256</span>
                    <svg width="9" height="9" fill="none" stroke="#aaa"><path d="M.5.5h8v8h-8zM2 2l5 5M7 2 2 7" /></svg>
                    <Box size={10} />
                    <Lock size={9} />
                    <StickyNote size={9} />
                    <Trash2 size={9} />
                </SwatchTools>
            </Group>

            <Group $after={2}>
                <Legend><i />图像大小<i /></Legend>
                <SizeGrid>
                    <Field $h={15} $gap={3}><label htmlFor="w">W:</label><NumberInput id="w" $w={31} defaultValue="3118" />像素</Field>
                    <svg width="20" height="24" viewBox="0 0 20 24" fill="none" stroke="#222">
                        <path d="M2 3.500h6v17H2" strokeWidth="1.500" />
                        <rect x="12" y="7" width="4" height="6" rx="2" fill="#999" />
                        <rect x="12" y="11" width="4" height="6" rx="2" fill="#999" />
                    </svg>
                    <Field $h={15} $end><label htmlFor="pct">百分比:</label><NumberInput id="pct" $w={40} defaultValue="100" />%</Field>
                    <Field $h={15} $gap={3}><label htmlFor="h">H:</label><NumberInput id="h" $w={31} defaultValue="3118" />像素</Field>
                    <Field>品质: <Select label="品质" value="两次立方" /></Field>
                </SizeGrid>
            </Group>

            <Group $bottom={3}>
                <Legend><i />动画<i /></Legend>
                <Field>循环选项: <Select label="循环选项" value="一次" /></Field>
                <FrameBar>
                    <span>1/3</span>
                    <FrameButton $dim><svg width="12" height="6" fill="currentColor"><path d="M6 0v6L0 3zM12 0v6L6 3z" /></svg></FrameButton>
                    <FrameButton><svg width="9" height="6" fill="currentColor"><path d="M6 0v6L0 3zM7 0h1v6H7z" /></svg></FrameButton>
                    <FrameButton><svg width="6" height="6" fill="currentColor"><path d="M0 0v6l6-3z" /></svg></FrameButton>
                    <FrameButton><svg width="9" height="6" fill="currentColor"><path d="M0 0h1v6H0zM2 0v6l6-3z" /></svg></FrameButton>
                    <FrameButton><svg width="12" height="6" fill="currentColor"><path d="M0 0v6l6-3zM6 0v6l6-3z" /></svg></FrameButton>
                </FrameBar>
            </Group>
        </Settings>
    );
}

function ExportDialog() {
    return (
        <Dialog>
            <TitleBar>存储为 Web 所用格式 (100%)</TitleBar>
            <DialogBody>
                <SideTools>
                    <SideTool $on><Hand size={13} strokeWidth={1.500} fill="#fff" /></SideTool>
                    <SideTool>
                        <svg width="14" height="12"><path d="M0 1v5l3-2zM13 0 7 4 2 11l7-4z" fill="#444" /></svg>
                    </SideTool>
                    <SideTool>
                        <svg width="12" height="12" fill="none" stroke="#444"><circle cx="4.500" cy="4.500" r="3.500" fill="#fff" /><path d="m7 7 4.500 4.500" strokeWidth="2" /></svg>
                    </SideTool>
                    <SideTool><Pipette size={12} fill="#333" strokeWidth={1.500} /></SideTool>
                    <SideLine />
                    <SideTool $on $tall><BlackSwatch /></SideTool>
                    <SideTool $on $tall>
                        <svg width="13" height="10" fill="#fff" stroke="#333">
                            <path d="M.5.5h12v9H.5z" fill="#aaa" /><path d="M3.500 3h6v4h-6z" /><path d="M.5 2.500h12M.5 7.500h12" />
                        </svg>
                    </SideTool>
                </SideTools>
                <Preview />
                <ExportSettings />
            </DialogBody>
            <DialogFooter>
                <PushButton $w={48}>预览...</PushButton>
                <HelpDrop $w={38}>
                    <svg width="16" height="11">
                        <circle cx="5.500" cy="5.500" r="5" fill="#555" />
                        <path d="M2 3q3-2 5 0L4 8z" fill="#ddd" />
                        <circle cx="11" cy="6" r="4.700" fill="#222" />
                        <path d="M9.500 4.500q1.500-2 3 0 0 1-1.500 2v1M11 8.500v1" stroke="#fff" fill="none" />
                    </svg>
                    <ChevronDown size={9} />
                </HelpDrop>
                <PushButton $main>存储...</PushButton>
                <PushButton>取消</PushButton>
                <PushButton>完成</PushButton>
            </DialogFooter>
        </Dialog>
    );
}

function SystemBar() {
    return (
        <Taskbar>
            <TaskItem $first>
                <svg width="12" height="12" fill="#fff"><path d="M0 1.700 5 1v4.600H0zM5.700.9 12 0v5.600H5.700zM0 6.300h5V11l-5-.7zM5.700 6.300H12V12l-6.300-.9z" /></svg>
            </TaskItem>
            <TaskItem>
                <svg width="13" height="10"><ellipse cx="6.500" cy="5" rx="6" ry="4.500" fill="#fff" /><path d="M4 5h1M8 5h1" stroke="#567300" /></svg>
            </TaskItem>
            <TaskItem>
                <svg width="15" height="12" fill="none" stroke="#e8eddc"><path d="M3.500.5h8v10h-8zM2 2.500H.5v6H2M13 2.500h1.500v6H13" /></svg>
            </TaskItem>
            <TaskItem $open>
                <svg width="17" height="14"><path d="M0 1h6l1 2h9v10H0z" fill="#f5c75a" /><path d="M0 4h16v9H0z" fill="#fbe096" /><path d="M3 8h10v6h-3v-3H6v3H3z" fill="#28a4e4" /></svg>
            </TaskItem>
            <TaskItem $open>
                <svg width="18" height="17" viewBox="0 0 18 17" fill="none">
                    <path d="M14 11.500A5.500 5.500 0 1 1 14.500 8H5" stroke="#4fc1f5" strokeWidth="3" />
                    <path d="M2 15Q-1 12 8 4.500 15-1 16.500 2q.5 1-.5 3" stroke="#ffd53e" strokeWidth="1.400" />
                </svg>
            </TaskItem>
            <TaskItem>
                <svg width="17" height="17"><path d="M1 5h14l-1 11-12-1z" fill="#fff" /><path d="M5 5q0-4 3-4t3 4" fill="none" stroke="#fff" /><path d="M4.500 7.500h3v3h-3zM8.500 7.200h3.500v3.300H8.500zM4.500 11.300h3v2.500h-3zM8.500 11.300H12v3H8.500z" fill="#567300" /></svg>
            </TaskItem>
            <TaskItem>
                <svg width="18" height="18" viewBox="0 0 18 18" fill="none"><path d="M0 0h18v18H0z" fill="#e60012" /><path d="M7.500 4.500Q3 6.500 4 11q2 4 6 3.500 5-1 4-5.500-3-4-6-1-1.500 3.500 1 3.500 2.500-1 1-5-1-3.500 2.500-3" stroke="#fff" strokeWidth="1.400" /></svg>
            </TaskItem>
            <TaskItem>
                <svg width="18" height="18"><circle cx="9" cy="9" r="8.500" fill="#2f8fe6" /><path d="M2 4q7-2 10-2 2 4 3 6 0 5-5 7 2-4-1-7-4-3-7-4z" fill="#fff" /></svg>
            </TaskItem>
            <TaskItem>
                <svg width="18" height="18" fill="none"><rect width="18" height="18" rx="2" fill="#36b0f4" /><g stroke="#fff" strokeWidth="1.800"><circle cx="9" cy="7" r="3" /><circle cx="5.500" cy="11" r="2.500" /><path d="M10 9q3 5 5 2 0-3-3-2l-2 3" /></g></svg>
            </TaskItem>
            <TaskItem $on $open>
                <svg width="16" height="16"><path d="M.5.5h15v15H.5z" fill="#0c1f2c" stroke="#2fc1ee" /><text x="3" y="12" fontSize="9" fontWeight="bold" fill="#2fc1ee">Ps</text></svg>
            </TaskItem>
            <Tray>
                <span><ChevronUp size={11} /></span>
                <span><svg width="11" height="11" fill="none" stroke="#fff"><path d="M0 0h11v11H0z" fill="#ef5b1e" stroke="none" /><path d="M3 2.500 5 4M2 5.500h7M5.500 1.500v4M8 2 6.500 4M3 8.500h5M4 5.500v3M7 5.500v3" /></svg></span>
                <span><svg width="12" height="12"><ellipse cx="5.500" cy="6" rx="4.500" ry="6" fill="#222" /><path d="M1 6h10v3H1z" fill="#e23a20" /><path d="M4 7h8v4H4z" fill="#ffc93c" /></svg></span>
                <span><svg width="13" height="10" fill="none" stroke="#fff"><path d="M4.500 2.500h7v6h-7z" /><path d="M6 4h4v3H6z" fill="#fff" /><path d="M12.500 4v3M1 1v3h3V1M2.500 4v3h2" /></svg></span>
                <span><Volume2 size={12} /></span>
                <span><Rss size={11} style={{ transform: "scaleX(-1)" }} /></span>
                <span><svg width="12" height="12"><path d="M0 0h12v9H9l-2 3-1-3H0z" fill="#fff" /><path d="M2 2.500h8M2 4.500h8M2 6.500h4" stroke="#567300" /></svg></span>
                <span>英</span>
                <span><svg width="11" height="11"><path d="M0 0h11v11H0z" fill="#fff" /><path d="M2.500 9V2.500l3 5 3-5V9" fill="none" stroke="#111" strokeWidth="1.400" /></svg></span>
                <Clock>18:52<br />2016/12/25</Clock>
            </Tray>
        </Taskbar>
    );
}

export default function App() {
    return (
        <>
            <GlobalStyle />
            <Screen>
                <Desktop>
                    <MenuBar>
                        <Logo>Ps</Logo>
                        <span>文件(F)</span>
                        <span>编辑(E)</span>
                        <span>图像(I)</span>
                        <WindowButtons>
                            <WindowButton $first><svg width="7" height="3" fill="#eee"><path d="M0 0h7v3H0z" /></svg></WindowButton>
                            <WindowButton><svg width="9" height="8" fill="#646464" stroke="#eee"><path d="M3.500.5h5v5h-5zM.5 2.500h5v5h-5z" /></svg></WindowButton>
                            <WindowButton $wide><svg width="7" height="7" stroke="#eee" strokeWidth="1.700"><path d="m.5.5 6 6M6.500.5l-6 6" /></svg></WindowButton>
                        </WindowButtons>
                    </MenuBar>
                    <OptionsBar>
                        <Grip />
                        <span />
                        <MoveIcon />
                        <Caret />
                        <Divider />
                        <CheckLabel><DarkCheck type="checkbox" />自动选择：</CheckLabel>
                        <SelectWrap>
                            <DarkSelect $w={60} aria-label="自动选择"><option>组</option></DarkSelect>
                            <UpDown />
                        </SelectWrap>
                        <SelectWrap $push>
                            <DarkSelect $w={76} aria-label="工作区"><option>基本功能</option></DarkSelect>
                            <UpDown />
                        </SelectWrap>
                    </OptionsBar>
                    <Workspace>
                        <ToolPanel />
                        <DocumentArea />
                        <RightPanels />
                    </Workspace>
                    <ExportDialog />
                </Desktop>
                <SystemBar />
                <Watermark>
                    <WatermarkBrand>
                        <b>Bai</b>
                        <svg width="46" height="58" viewBox="0 0 46 58" fill="#fff">
                            <ellipse cx="5" cy="24" rx="6" ry="8" />
                            <ellipse cx="16" cy="11" rx="6" ry="9" />
                            <ellipse cx="30" cy="11" rx="6" ry="9" />
                            <ellipse cx="40" cy="23" rx="6" ry="8" />
                            <path d="M22 24q5 0 8 6 9 8 11 16 0 8-9 9-9-2-18 0-11 0-11-9 1-8 10-15 4-7 9-7z" />
                            <text x="10" y="49" fontSize="17" fontWeight="bold" fill="#a88f8f">du</text>
                        </svg>
                        <b>经验</b>
                    </WatermarkBrand>
                    <WatermarkUrl>jingyan.baidu.com</WatermarkUrl>
                </Watermark>
            </Screen>
        </>
    );
}
